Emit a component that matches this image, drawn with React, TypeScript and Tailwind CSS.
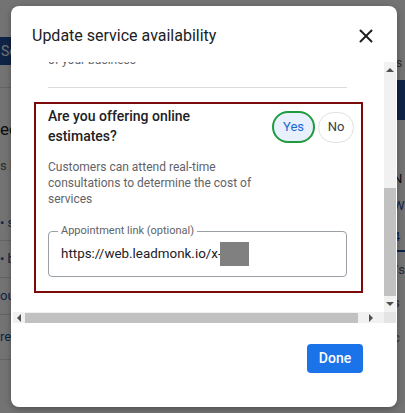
import { X } from 'lucide-react';

function PageBehind() {
  return (
    <div className="flex h-[413px] w-[405px] bg-white font-['Roboto',sans-serif]">
      <div className="flex w-[60px] flex-col">
        <div className="h-[37px]" />
        <div className="flex h-[28px] items-center bg-[#1f4f9c] pl-[1px] text-[14px] text-white">Sea</div>
        <div className="h-[23px] border-b border-[#dadce0]" />
        <div className="flex h-[58px] items-end pb-[4px] text-[17px] text-[#202124]">ec</div>
        <div className="flex h-[40px] items-center text-[13px] text-[#5f6368]">s k</div>
        <div className="h-[20px]" />
        <div className="flex h-[35px] items-center border-b border-[#dadce0] text-[13px] text-[#1a4fa0]">• s</div>
        <div className="flex h-[37px] items-center border-b border-[#dadce0] text-[13px] text-[#1a4fa0]">• b</div>
        <div className="flex h-[37px] items-center border-b border-[#dadce0] text-[13px] text-[#1a4fa0]">our</div>
        <div className="flex h-[45px] items-center border-b border-[#dadce0] text-[13px] text-[#1a4fa0]">re</div>
      </div>
      <div className="flex-1" />
      <div className="flex w-[12px] flex-col">
        <div className="flex h-[80px] items-end pb-[8px] text-[12px] text-[#5f6368]">is</div>
        <div className="h-[40px] bg-[#1f4f9c]" />
        <div className="flex h-[68px] items-end text-[13px] text-[#202124]">N</div>
        <div className="flex h-[36px] items-center text-[13px] text-[#1a4fa0]">W</div>
        <div className="flex h-[26px] items-center text-[13px] text-[#1a4fa0]">4</div>
        <div className="h-[2px] bg-[#1a4fa0]" />
        <div className="flex h-[36px] items-center text-[13px] text-[#5f6368]">/s</div>
        <div className="flex h-[30px] items-center text-[13px] text-[#5f6368]">s</div>
        <div className="flex h-[40px] items-center text-[13px] text-[#5f6368]">c</div>
      </div>
    </div>
  );
}

function Tri({ dir }: { dir: 'up' | 'down' | 'left' | 'right' }) {
  const pts = {
    up: '0,4 4,0 8,4',
    down: '0,0 8,0 4,4',
    left: '4,0 4,8 0,4',
    right: '0,0 0,8 4,4',
  }[dir];
  const size = dir === 'up' || dir === 'down' ? { w: 8, h: 4 } : { w: 4, h: 8 };
  return (
    <svg width={size.w} height={size.h} viewBox={`0 0 ${size.w} ${size.h}`}>
      <polygon points={pts} fill="#505050" />
    </svg>
  );
}

export default function App() {
  return (
    <div className="relative h-[413px] w-[405px] overflow-hidden font-['Roboto',sans-serif]">
      <PageBehind />
      <div className="absolute inset-0 bg-black/55" />

      <div className="absolute left-[11px] top-[6px] flex h-[401px] w-[386px] flex-col rounded-[8px] bg-white shadow-[0_2px_6px_rgba(0,0,0,0.3)]">
        {/* header */}
        <div className="flex h-[56px] items-start justify-between pl-[21px] pr-[20px] pt-[18px]">
          <div className="text-[16px] leading-[24px] text-[#202124]">Update service availability</div>
          <X className="mt-[1px] h-[22px] w-[22px] text-[#202124]" strokeWidth={2.2} />
        </div>

        {/* scroll region */}
        <div className="ml-[2px] mr-[1px] flex h-[261px] flex-col">
          <div className="flex h-[250px]">
            <div className="w-[371px] overflow-hidden">
              <div className="-mt-[12px] flex flex-col pl-[21px]">
                <div className="pl-[14px] text-[12px] leading-[20px] text-[#5f6368]">of your business</div>
                <div className="ml-[14px] mt-[17px] h-px w-[299px] bg-[#dadce0]" />

                <div className="mt-[14px] w-[329px] border-2 border-[#7b0b0b] pb-[14px] pl-[12px] pr-[7px] pt-[2px]">
                  <div className="flex items-start justify-between">
                    <div className="w-[180px] text-[14px] font-medium leading-[20px] text-[#202124]">
                      Are you offering online estimates?
                    </div>
                    <div className="mt-[5px] flex items-center gap-[3px]">
                      <div className="flex h-[32px] w-[43px] items-center justify-center rounded-full border-2 border-[#1e9b3c] bg-[#e8f0fe] text-[13px] text-[#1967d2]">
                        Yes
                      </div>
                      <div className="flex h-[31px] w-[36px] items-center justify-center rounded-full border border-[#e0e0e0] text-[13px] text-[#3c4043]">
                        No
                      </div>
                    </div>
                  </div>

                  <div className="mt-[13px] w-[215px] text-[12px] leading-[16px] text-[#5f6368]">
                    Customers can attend real-time consultations to determine the cost of services
                  </div>

                  <div className="relative mt-[24px] flex h-[46px] w-[299px] items-center rounded-[4px] border border-[#9aa0a6] pl-[12px]">
                    <span className="absolute -top-[8px] left-[9px] bg-white px-[3px] text-[11px] leading-[14px] text-[#5f6368]">
                      Appointment link (optional)
                    </span>
                    <span className="text-[13.4px] leading-[24px] text-[#202124]">https://web.leadmonk.io/x-</span>
                    <span className="-ml-[2px] inline-block h-[24px] w-[29px] bg-[#808080]" />
                  </div>
                </div>
              </div>
            </div>

            {/* vertical scrollbar */}
            <div className="flex w-[12px] flex-col bg-[#f1f1f1]">
              <div className="flex h-[14px] items-center justify-center pt-[2px]">
                <Tri dir="up" />
              </div>
              <div className="mt-[112px] h-[108px] bg-[#c1c1c1]" />
              <div className="flex flex-1 items-center justify-center">
                <Tri dir="down" />
              </div>
            </div>
          </div>

          {/* horizontal scrollbar */}
          <div className="flex h-[11px]">
            <div className="flex w-[371px] items-center bg-[#f1f1f1]">
              <div className="flex w-[12px] items-center justify-center">
                <Tri dir="left" />
              </div>
              <div className="h-[10px] w-[333px] bg-[#c1c1c1]" />
              <div className="flex flex-1 items-center justify-center">
                <Tri dir="right" />
              </div>
            </div>
            <div className="w-[12px] bg-[#e4e4e4]" />
          </div>
        </div>

        {/* footer */}
        <div className="flex justify-end pr-[34px] pt-[21px]">
          <button className="h-[29px] w-[56px] rounded-[4px] bg-[#1a73e8] text-[14px] font-medium text-white">
            Done
          </button>
        </div>
      </div>
    </div>
  );
}
